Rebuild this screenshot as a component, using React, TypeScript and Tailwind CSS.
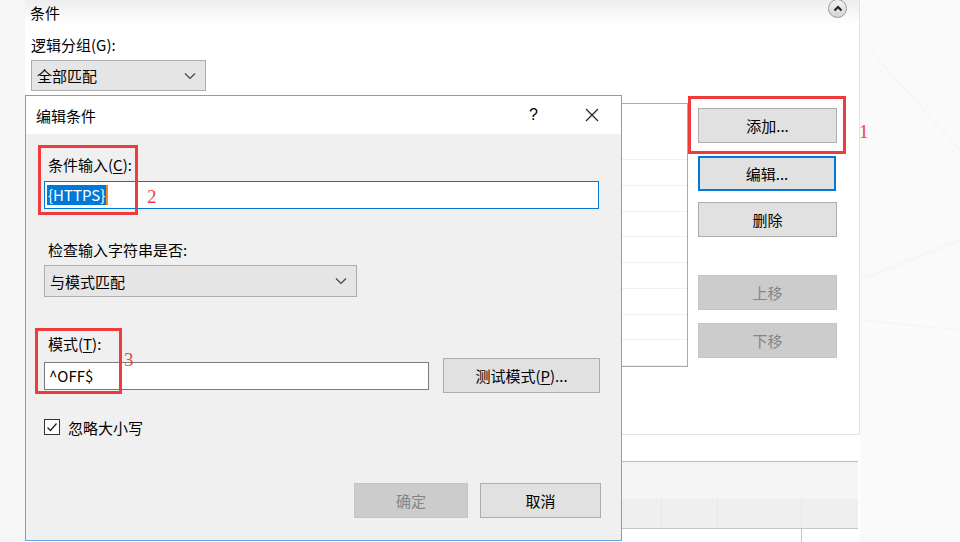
import React from "react";

const font = "font-['Noto_Sans_CJK_SC',sans-serif]";

// Classic Win10 push button
const WinButton = ({
  label,
  className = "",
  disabled = false,
  focused = false,
}: {
  label: React.ReactNode;
  className?: string;
  disabled?: boolean;
  focused?: boolean;
}) => (
  <div
    className={`flex items-center justify-center h-[35px] text-[15px] leading-none ${
      disabled
        ? "bg-[#cccccc] border border-[#c4c4c4] text-[#858585]"
        : focused
        ? "bg-[#e1e1e1] border-2 border-[#0078d7] text-black"
        : "bg-[#e1e1e1] border border-[#adadad] text-black"
    } ${className}`}
  >
    {label}
  </div>
);

const Chevron = () => (
  <svg width="12" height="8" viewBox="0 0 12 8" className="shrink-0">
    <path d="M1 1.5 L6 6.5 L11 1.5" fill="none" stroke="#444" strokeWidth="1.2" />
  </svg>
);

const Select = ({ value, className = "" }: { value: string; className?: string }) => (
  <div
    className={`flex items-center justify-between bg-[#e5e5e5] border border-[#adadad] pl-[5px] pr-[9px] text-[15px] text-black ${className}`}
  >
    <span className="leading-none">{value}</span>
    <Chevron />
  </div>
);

const RedBox = ({ className }: { className: string }) => (
  <div className={`absolute border-[3px] border-[#ef3b3b] pointer-events-none ${className}`} />
);

const RedNum = ({ n, className }: { n: string; className: string }) => (
  <div
    className={`absolute font-['Liberation_Serif',serif] text-[19px] leading-none text-[#ec4545] ${className}`}
  >
    {n}
  </div>
);

export default function App() {
  const listRows = [0, 1, 2, 3, 4, 5, 6, 7];

  return (
    <div className={`relative w-[960px] h-[542px] overflow-hidden bg-[#fafafa] flex ${font}`}>
      {/* left strip */}
      <div className="w-[25px] h-full bg-[#f6f6f6]" />

      {/* main page panel */}
      <div className="w-[835px] h-full flex flex-col bg-white">
        {/* conditions group */}
        <div className="h-[435px] border-r border-b border-[#e2e2e2] flex flex-col">
          <div className="h-[24px] flex items-center justify-between pl-[5px] pr-[12px] bg-gradient-to-b from-[#eeeeee] to-white">
            <span className="text-[15px] leading-none text-black mt-[1px]">条件</span>
            <div className="w-[19px] h-[19px] -mt-[8px] rounded-full border border-[#9a9a9a] bg-gradient-to-b from-[#f4f4f4] to-[#d4d4d4] flex items-center justify-center">
              <svg width="10" height="7" viewBox="0 0 10 7">
                <path d="M1.5 5.5 L5 2 L8.5 5.5" fill="none" stroke="#222" strokeWidth="2" />
              </svg>
            </div>
          </div>

          <div className="pl-[6px] mt-[11px] text-[15px] leading-[20px] text-black">逻辑分组(G):</div>
          <Select value="全部匹配" className="ml-[6px] mt-[5px] w-[175px] h-[31px]" />

          <div className="flex mt-[12px] ml-[6px]">
            {/* rules list */}
            <div className="w-[657px] h-[264px] border border-[#a9a9a9] bg-white flex flex-col">
              <div className="h-[57px] border-b border-[#f0f0f0]" />
              {listRows.map((r) => (
                <div key={r} className="h-[26px] border-b border-[#f0f0f0]" />
              ))}
            </div>

            {/* action buttons */}
            <div className="ml-[10px] flex flex-col w-[139px]">
              <WinButton label="添加..." className="mt-[5px]" />
              <WinButton label="编辑..." focused className="mt-[13px] w-[138px]" />
              <WinButton label="删除" className="mt-[11px]" />
              <WinButton label="上移" disabled className="mt-[38px]" />
              <WinButton label="下移" disabled className="mt-[13px]" />
            </div>
          </div>
        </div>

        <div className="h-[26px]" />
        {/* server variables group header (collapsed) */}
        <div className="h-[38px] border-t border-[#bcbcbc] bg-[#f5f5f5] w-[833px]" />
        <div className="h-[30px] bg-[#efefef] border-b border-[#c6c6c6] w-[833px] flex">
          <div className="w-[637px] border-r border-[#e6e6e6]" />
          <div className="w-[56px] border-r border-[#e6e6e6]" />
          <div className="w-[84px] border-r border-[#e6e6e6]" />
        </div>
        <div className="flex-1 flex w-[833px]">
          <div className="w-[777px] border-r border-[#c6c6c6]" />
        </div>
      </div>

      {/* right area: faint background */}
      <div className="flex-1 h-full bg-[#fafafa]">
        <svg width="100" height="542" viewBox="0 0 100 542">
          <path d="M10 50 L100 150" stroke="#f0f0f0" strokeWidth="1" />
          <path d="M0 280 L100 240" stroke="#f2f2f2" strokeWidth="1" />
          <path d="M0 320 L100 330" stroke="#f3f3f3" strokeWidth="1" />
        </svg>
      </div>

      {/* edit condition dialog window */}
      <div className="absolute left-[25px] top-[95px] w-[597px] h-[446px] border border-[#62a8e5] bg-[#f0f0f0] flex flex-col">
        <div className="h-[38px] bg-white flex items-center pl-[10px] shrink-0">
          <span className="text-[15px] leading-none text-black">编辑条件</span>
          <span className="ml-auto text-[16px] leading-none text-black font-['Liberation_Sans',sans-serif] mr-[47px]">?</span>
          <svg width="14" height="14" viewBox="0 0 14 14" className="mr-[22px]">
            <path d="M1 1 L13 13 M13 1 L1 13" stroke="#222" strokeWidth="1.2" />
          </svg>
        </div>

        <div className="flex flex-col pl-[18px] pt-[21px] text-[15px] text-black">
          <div className="leading-[20px] pl-[4px]">
            条件输入(<span className="underline underline-offset-2">C</span>):
          </div>
          <div className="mt-[6px] w-[555px] h-[28px] bg-white border border-[#0078d7] flex items-center pl-[2px]">
            <span className="bg-[#0078d7] text-white leading-[20px] px-[1px]">{"{HTTPS}"}</span>
            <span className="w-[2px] h-[20px] bg-[#f08a24]" />
          </div>

          <div className="mt-[31px] leading-[20px] pl-[4px]">检查输入字符串是否:</div>
          <Select value="与模式匹配" className="mt-[5px] w-[313px] h-[32px]" />

          <div className="mt-[37px] leading-[20px] pl-[4px]">
            模式(<span className="underline underline-offset-2">T</span>):
          </div>
          <div className="mt-[4px] flex items-center">
            <div className="w-[385px] h-[28px] bg-white border border-[#7a7a7a] flex items-center pl-[4px]">
              <span className="leading-none">^OFF$</span>
            </div>
            <WinButton
              label={
                <span>
                  测试模式(<span className="underline underline-offset-2">P</span>)...
                </span>
              }
              className="ml-[14px] w-[157px]"
            />
          </div>

          <div className="mt-[24px] flex items-center h-[20px]">
            <div className="w-[16px] h-[16px] bg-white border border-[#333] flex items-center justify-center">
              <svg width="12" height="12" viewBox="0 0 12 12">
                <path d="M1.5 6.5 L4.5 9.5 L10.5 2.5" fill="none" stroke="#222" strokeWidth="1.3" />
              </svg>
            </div>
            <span className="ml-[8px] leading-none">忽略大小写</span>
          </div>

          <div className="mt-[46px] flex justify-end pr-[20px]">
            <WinButton label="确定" disabled className="w-[114px]" />
            <WinButton label="取消" className="ml-[12px] w-[121px]" />
          </div>
        </div>
      </div>

      {/* annotations */}
      <RedBox className="left-[688px] top-[96px] w-[158px] h-[58px]" />
      <RedNum n="1" className="left-[859px] top-[122px]" />
      <RedBox className="left-[38px] top-[145px] w-[100px] h-[70px]" />
      <RedNum n="2" className="left-[147px] top-[187px]" />
      <RedBox className="left-[35px] top-[328px] w-[87px] h-[66px]" />
      <RedNum n="3" className="left-[124px] top-[350px]" />
    </div>
  );
}
